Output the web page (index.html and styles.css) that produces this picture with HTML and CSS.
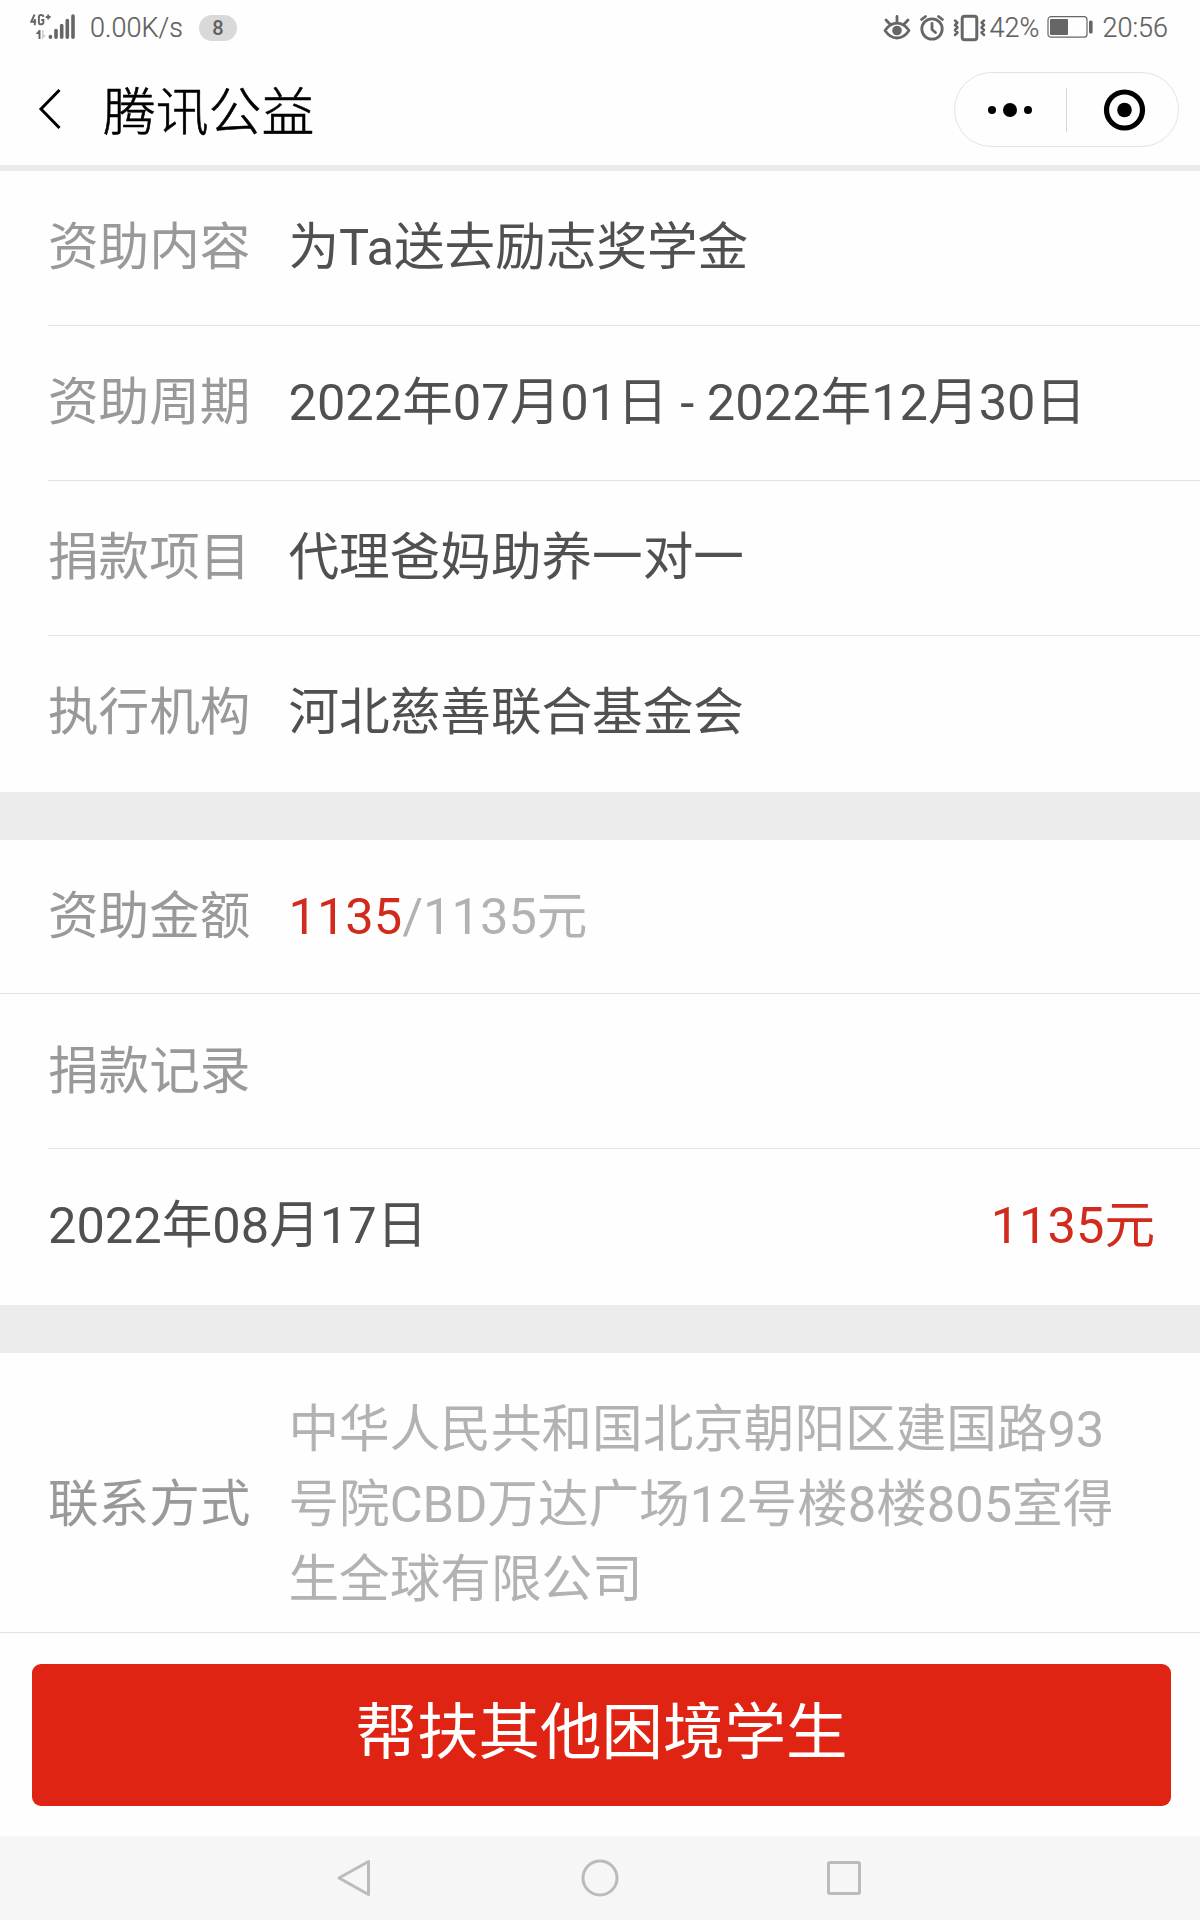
FILE: index.html
```html
<!DOCTYPE html>
<html lang="zh-CN">
<head>
<meta charset="utf-8">
<title>腾讯公益</title>
<link rel="stylesheet" href="styles.css">
</head>
<body>
<div class="screen">
  <header class="status">
    <div class="status-left">
      <svg class="signal" width="46" height="26" viewBox="0 0 46 26">
        <g fill="none" stroke="#666" stroke-width="1.900">
          <path d="M4.600 .500L1.200 7.800H6.200M4.800 5V11.200M13.400 2.800Q13.200 1 11.200 1Q8.900 1 8.900 3V8.400Q8.900 10.300 11.200 10.300Q13.400 10.300 13.400 8.500V6H11.200M15.800 3H20.600M18.200 .600V5.400"/>
        </g>
        <path fill="#666" d="M6 19.500L9 16H10.500V25H8.500V20H6Z"/>
        <path fill="#ccc" d="M12 16H13.500V21H16L12.500 25H12Z"/>
        <g stroke="#666" stroke-width="3.600" stroke-linecap="round">
          <path d="M20.400 22.600V23.200M26 16.500V23.200M31.700 11.500V23.200M37.300 6.500V23.200M43 2V23.200"/>
        </g>
      </svg>
      <span class="speed">0.00K/s</span>
      <span class="count">8</span>
    </div>
    <div class="status-right">
      <svg class="icons" width="104" height="28" viewBox="0 0 104 28">
        <g fill="none" stroke="#666" stroke-width="2.800" stroke-linecap="round" stroke-linejoin="round">
          <path d="M2 16.500Q7 9.200 14 9.200T26 16.500Q21 24 14 24T2 16.500ZM14 8.500V2.500M6.800 10L3 6M21.200 10L25 6"/>
          <circle cx="49" cy="15" r="10.200"/>
          <path d="M49 9.500V15.500L52.500 18.500M38.500 5.500L42.500 2.500M59.500 5.500L55.500 2.500"/>
          <rect x="79.200" y="2.200" width="14.600" height="23.600" rx="2.500" stroke-width="3"/>
          <path stroke-width="2.500" d="M72 6.500L74.500 8.700L72 11L74.500 13.500L72 16L74.500 18.500L72 21M101 6.500L98.500 8.700L101 11L98.500 13.500L101 16L98.500 18.500L101 21"/>
        </g>
        <circle cx="14" cy="16.500" r="4.800" fill="#666"/>
      </svg>
      <span class="percent">42%</span>
      <svg class="battery" width="46" height="22" viewBox="0 0 46 22">
        <rect x="1" y=".7" width="39" height="20.500" rx="3" fill="none" stroke="#666" stroke-width="1.200"/>
        <rect x="3" y="3" width="18" height="16" rx="1" fill="#666"/>
        <rect x="42" y="4.500" width="3.600" height="13" rx="1.500" fill="#666"/>
      </svg>
      <span class="clock">20:56</span>
    </div>
  </header>

  <nav class="titlebar">
    <svg class="back" width="24" height="42" viewBox="0 0 24 42">
      <path d="M21.500 2L3 21L21.500 40" fill="none" stroke="#000" stroke-width="3"/>
    </svg>
    <h1 class="title">腾讯公益</h1>
    <div class="capsule">
      <svg class="capsule-half" width="111" height="72" viewBox="0 0 111 72">
        <circle cx="37" cy="36" r="4"/><circle cx="55" cy="36" r="7"/><circle cx="73" cy="36" r="4"/>
      </svg>
      <div class="capsule-line"></div>
      <svg class="capsule-half" width="111" height="72" viewBox="0 0 111 72">
        <circle cx="57.500" cy="36" r="18" fill="none" stroke="#000" stroke-width="5.200"/><circle cx="57.500" cy="36" r="7.300"/>
      </svg>
    </div>
  </nav>

  <main>
    <section class="group">
      <div class="row"><span class="label">资助内容</span><span class="value">为Ta送去励志奖学金</span></div>
      <div class="row"><span class="label">资助周期</span><span class="value">2022年07月01日 - 2022年12月30日</span></div>
      <div class="row"><span class="label">捐款项目</span><span class="value">代理爸妈助养一对一</span></div>
      <div class="row last"><span class="label">执行机构</span><span class="value">河北慈善联合基金会</span></div>
    </section>
    <section class="group">
      <div class="row full"><span class="label">资助金额</span><span class="value total"><span class="raised">1135</span>/1135元</span></div>
      <div class="row low"><span class="label">捐款记录</span></div>
      <div class="row last record"><span>2022年08月17日</span><span class="raised">1135元</span></div>
    </section>
    <section class="group contact">
      <span class="label">联系方式</span>
      <p class="address">中华人民共和国北京朝阳区建国路93<br>号院CBD万达广场12号楼8楼805室得<br>生全球有限公司</p>
    </section>
  </main>

  <div class="action"><button class="button">帮扶其他困境学生</button></div>

  <footer class="softkeys">
    <svg width="40" height="44" viewBox="0 0 40 44"><path d="M33.500 5.500V38.500L4 22Z"/></svg>
    <svg width="40" height="44" viewBox="0 0 40 44"><circle cx="20" cy="22" r="17"/></svg>
    <svg width="40" height="44" viewBox="0 0 40 44"><rect x="3.500" y="6.500" width="31" height="31" rx="1.500"/></svg>
  </footer>
</div>
</body>
</html>
```
FILE: styles.css
```css
* { box-sizing: border-box; }
body { margin: 0; background: #fefefe; font-family: Roboto, "Noto Sans CJK SC", sans-serif; color: #505050; }
.screen { width: 1200px; height: 1920px; display: flex; flex-direction: column; overflow: hidden; }

.status { height: 56px; display: flex; justify-content: space-between; padding: 0 32px 0 30px; color: #606060; font-size: 27px; font-weight: 300; line-height: 56px; -webkit-text-stroke: 0.2px #606060; }
.status-left, .status-right { display: flex; align-items: center; }
.signal { margin-top: -2px; }
.speed { margin-left: 14px; }
.count { margin-left: 16px; width: 38px; height: 26px; border-radius: 13px; background: #d9d9d9; font-size: 20px; line-height: 26px; text-align: center; font-weight: 500; -webkit-text-stroke: 0; }
.percent { margin-left: 3px; }
.battery { margin-left: 8px; margin-top: -2px; }
.clock { margin-left: 9px; }

.titlebar { height: 115px; border-bottom: 6px solid #ebebeb; display: flex; align-items: flex-start; padding: 0 21px 0 38px; }
.back { margin-top: 32px; }
.title { margin: 19px auto 0 41px; font-size: 52.8px; line-height: 76px; font-weight: 300; color: #000; -webkit-text-stroke: 0.6px #000; }
.capsule { margin-top: 16px; width: 225px; height: 75px; border: 1px solid #e3e3e3; border-radius: 38px; display: flex; align-items: center; }
.capsule-line { width: 1px; height: 44px; background: #d8d8d8; }

.group { font-size: 50.6px; line-height: 75px; background: #fefefe; }
.group + .group { border-top: 48px solid #ebebeb; }
.row { height: 155px; margin-left: 48px; padding-bottom: 2px; border-bottom: 1px solid #e3e3e3; display: flex; align-items: center; }
.row.last { height: 156px; border-bottom: 0; padding-bottom: 3px; }
.row.full { height: 154px; margin-left: 0; padding: 0 0 1px 48px; }
.row.low { padding-bottom: 0; }
.label { width: 240.5px; flex: none; color: #999; }
.total, .address { color: #b2b2b2; }
.raised { color: #d02b1d; }
.record { justify-content: space-between; padding-right: 45px; }
.contact { padding: 40px 0 16px 48px; display: flex; align-items: center; height: 328px; border-bottom: 1px solid #e3e3e3; }
.address { margin: 0; white-space: nowrap; }

.action { flex: 1; padding: 31px 29px 0 32px; }
.button { display: block; width: 100%; height: 142px; padding: 0 0 4px; border: 0; border-radius: 9px; background: #df2413; color: #fff; font: inherit; font-size: 61.5px; line-height: 90px; }

.softkeys { height: 84px; background: #f6f6f6; display: flex; justify-content: center; align-items: center; gap: 205px; }
.softkeys svg { fill: none; stroke: #bbb; stroke-width: 3; stroke-linejoin: round; }
```
